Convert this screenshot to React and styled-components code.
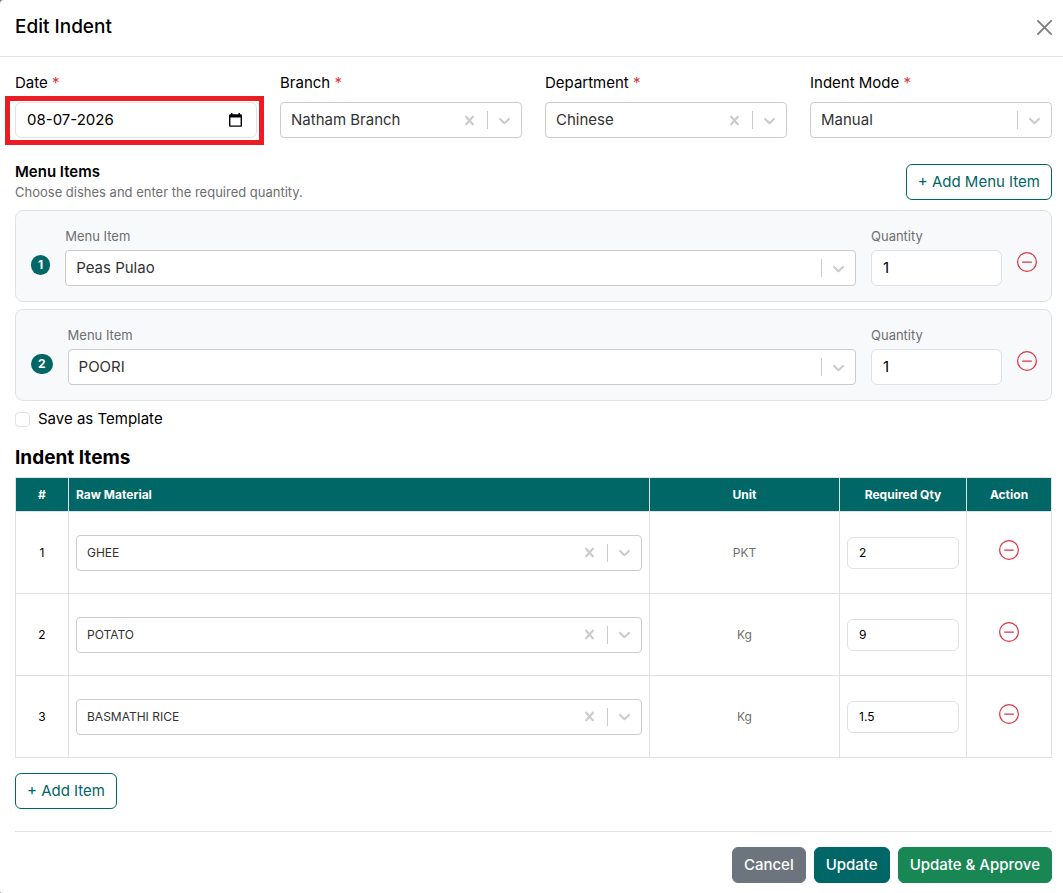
import React, { useId } from "react";
import styled, { createGlobalStyle } from "styled-components";
import { BsDashCircle } from "react-icons/bs";

const GlobalStyle = createGlobalStyle`
  *, *::before, *::after { box-sizing: border-box; }
  body {
    margin: 0;
    background: #7f7f7f;
    color: #000;
    font-family: Inter, "Liberation Sans", sans-serif;
    font-size: 15px;
    line-height: 22px;
  }
  button, input, select { font: inherit; color: inherit; }
`;

const Dialog = styled.main`
  background: #fff;
  border-radius: 4px 0 0 2px;
  min-height: 100vh;
`;

const Header = styled.header`
  display: flex;
  align-items: center;
  justify-content: space-between;
  height: 57px;
  padding: 0 11px 2px 15px;
  border-bottom: 1px solid #dee2e6;
`;

const Title = styled.h1`
  margin: 0;
  font-size: 19px;
  font-weight: 500;
  line-height: 28px;
`;

const CloseButton = styled.button`
  display: flex;
  padding: 0;
  border: 0;
  background: none;
  opacity: 0.5;
  cursor: pointer;
`;

const Body = styled.form`
  padding: 15px 11px 10px 15px;
`;

const FieldGrid = styled.div`
  display: grid;
  grid-template-columns: repeat(4, minmax(0, 1fr));
  gap: 23px;
`;

const Field = styled.div`
  flex: ${(p) => (p.$grow ? "1 1 0" : "none")};
  width: ${(p) => p.$width || "auto"};
  min-width: 0;
`;

const Label = styled.label`
  display: block;
  margin-bottom: ${(p) => (p.$small ? "4px" : "8px")};
  color: ${(p) => (p.$small ? "#6d6f72" : "#000")};
  font-size: ${(p) => (p.$small ? "13px" : "15px")};
  line-height: ${(p) => (p.$small ? "20px" : "22px")};
`;

const Required = styled.span`
  color: #dc3545;
`;

const SelectBox = styled.div`
  display: flex;
  align-items: center;
  height: 36px;
  border: 1px solid #ccc;
  border-radius: 4px;
  background: #fff;
`;

const NativeSelect = styled.select`
  flex: 1;
  min-width: 0;
  height: 100%;
  padding: 0 10px;
  border: 0;
  outline: 0;
  background: none;
  color: #333;
  appearance: none;
  font-size: ${(p) => (p.$small ? "12px" : "15px")};
`;

const Indicator = styled.span`
  display: flex;
  padding: 0 7px;
  color: #ccc;
`;

const ClearButton = styled(Indicator).attrs({ as: "button", type: "button" })`
  padding: 0 8px;
  border: 0;
  background: none;
  cursor: pointer;
`;

const Separator = styled.span`
  align-self: stretch;
  width: 1px;
  margin: 8px 0;
  background: #ccc;
`;

const Input = styled.input`
  display: block;
  width: 100%;
  height: ${(p) => (p.$small ? "32px" : "36px")};
  padding: ${(p) => (p.$small ? "0 11px" : "0 11px 2px")};
  border: 1px solid #dee2e6;
  border-radius: 6px;
  outline: 0;
  background: #fff;
  font-size: ${(p) => (p.$small ? "12px" : "15px")};
`;

const DateBox = styled.div`
  position: relative;
  display: flex;
  align-items: center;
  height: 36px;
  padding-right: 14px;
  border: 1px solid #dee2e6;
  border-radius: 6px;

  &::after {
    content: "";
    position: absolute;
    inset: -7px -8px -8px -11px;
    border: 5px solid #ed1c24;
    pointer-events: none;
  }
`;

const DateInput = styled(Input)`
  flex: 1;
  min-width: 0;
  height: 100%;
  border: 0;
  background: none;
`;

const IconButton = styled.button`
  display: inline-flex;
  padding: 0;
  border: 0;
  background: none;
  color: ${(p) => (p.$danger ? "#dc3545" : "#000")};
  cursor: pointer;
`;

const SectionBar = styled.div`
  display: flex;
  align-items: center;
  justify-content: space-between;
  margin: 24px 0 8px;
`;

const SectionTitle = styled.h2`
  margin: 0;
  font-size: ${(p) => (p.$large ? "19px" : "15px")};
  font-weight: ${(p) => (p.$large ? 700 : 600)};
  line-height: ${(p) => (p.$large ? "24px" : "20px")};
`;

const Hint = styled.p`
  margin: 0;
  color: #6d6f72;
  font-size: 13px;
  line-height: 20px;
`;

const Button = styled.button`
  height: 36px;
  padding: 0 11px;
  border: 1px solid ${(p) => p.$color};
  border-radius: 6px;
  background: ${(p) => (p.$outline ? "#fff" : p.$color)};
  color: ${(p) => (p.$outline ? p.$color : "#fff")};
  font-weight: ${(p) => (p.$outline ? 400 : 500)};
  white-space: nowrap;
  cursor: pointer;
`;

const CardList = styled.div`
  display: grid;
  gap: 7px;
`;

const Card = styled.div`
  display: flex;
  align-items: flex-end;
  gap: 15px;
  padding: 15px 14px 15px 15px;
  border: 1px solid #dee2e6;
  border-radius: 8px;
  background: #f8f9fa;
`;

const Badge = styled.span`
  margin-bottom: 11px;
  padding: 4px 7px;
  border-radius: 10px;
  background: #006666;
  color: #fff;
  font-size: 12px;
  font-weight: 700;
  line-height: 12px;
`;

const CardAction = styled.div`
  display: flex;
  margin-bottom: 14px;
`;

const CheckRow = styled.label`
  display: flex;
  align-items: center;
  gap: 8px;
  width: fit-content;
  margin: 7px 0 16px;
`;

const Checkbox = styled.input.attrs({ type: "checkbox" })`
  width: 15px;
  height: 15px;
  margin: 0;
  border: 1px solid #dee2e6;
  border-radius: 4px;
  background: #fff;
  appearance: none;

  &:checked { background: #006666; }
`;

const Table = styled.table`
  width: 100%;
  margin: 7px 0 15px;
  border-collapse: collapse;
  table-layout: fixed;
  font-size: 12px;
  line-height: 18px;
`;

const HeadCell = styled.th`
  width: ${(p) => p.$width || "auto"};
  height: 34px;
  padding: 0 7px;
  border: 1px solid #dee2e6;
  background: #006666;
  color: #fff;
  font-weight: 700;
  text-align: ${(p) => p.$align || "center"};
`;

const Cell = styled.td`
  height: 82px;
  padding: 0 7px;
  border: 1px solid #dee2e6;
  color: ${(p) => (p.$muted ? "#6d6f72" : "#000")};
  text-align: center;
  vertical-align: middle;
`;

const Footer = styled.footer`
  display: flex;
  justify-content: flex-end;
  gap: 8px;
  margin-top: 22px;
  padding-top: 15px;
  border-top: 1px solid #dee2e6;
`;

const TEAL = "#006666";

const CloseIcon = () => (
  <svg width="15" height="15" viewBox="0 0 16 16" aria-hidden="true">
    <path d="M.293.293a1 1 0 0 1 1.414 0L8 6.586 14.293.293a1 1 0 1 1 1.414 1.414L9.414 8l6.293 6.293a1 1 0 0 1-1.414 1.414L8 9.414l-6.293 6.293a1 1 0 0 1-1.414-1.414L6.586 8 .293 1.707a1 1 0 0 1 0-1.414z" />
  </svg>
);

const ChevronIcon = () => (
  <svg width="19" height="19" viewBox="0 0 20 20" fill="currentColor" aria-hidden="true">
    <path d="M4.516 7.548c0.436-0.446 1.043-0.481 1.576 0l3.908 3.747 3.908-3.747c0.533-0.481 1.141-0.446 1.574 0 0.436 0.445 0.408 1.197 0 1.615-0.406 0.418-4.695 4.502-4.695 4.502-0.217 0.223-0.502 0.335-0.787 0.335s-0.57-0.112-0.789-0.335c0 0-4.287-4.084-4.695-4.502s-0.436-1.17 0-1.615z" />
  </svg>
);

const ClearIcon = () => (
  <svg width="19" height="19" viewBox="0 0 20 20" fill="currentColor" aria-hidden="true">
    <path d="M14.348 14.849c-0.469 0.469-1.229 0.469-1.697 0l-2.651-3.030-2.651 3.029c-0.469 0.469-1.229 0.469-1.697 0-0.469-0.469-0.469-1.229 0-1.697l2.758-3.15-2.759-3.152c-0.469-0.469-0.469-1.228 0-1.697s1.228-0.469 1.697 0l2.652 3.031 2.651-3.031c0.469-0.469 1.228-0.469 1.697 0s0.469 1.229 0 1.697l-2.758 3.152 2.758 3.15c0.469 0.469 0.469 1.229 0 1.698z" />
  </svg>
);

const CalendarIcon = () => (
  <svg width="13" height="14" viewBox="0 0 13 14" aria-hidden="true">
    <path
      fillRule="evenodd"
      d="M2 0h1.500v1.200h6V0H11v1.200h.6c.8 0 1.400.6 1.400 1.400v9.800c0 .8-.6 1.400-1.400 1.400H1.400C.6 13.800 0 13.200 0 12.400V2.600c0-.8.6-1.400 1.400-1.400H2V0zM1.400 4.600v7.800h10.200V4.600H1.400z"
    />
  </svg>
);

function Select({ value, clearable, small, ...rest }) {
  return (
    <SelectBox>
      <NativeSelect $small={small} defaultValue={value} {...rest}>
        <option>{value}</option>
      </NativeSelect>
      {clearable && (
        <ClearButton aria-label="Clear selection">
          <ClearIcon />
        </ClearButton>
      )}
      <Separator />
      <Indicator>
        <ChevronIcon />
      </Indicator>
    </SelectBox>
  );
}

function SelectField({ label, ...rest }) {
  const id = useId();
  return (
    <Field>
      <Label htmlFor={id}>
        {label} <Required>*</Required>
      </Label>
      <Select id={id} {...rest} />
    </Field>
  );
}

function RemoveButton({ label }) {
  return (
    <IconButton type="button" $danger aria-label={label}>
      <BsDashCircle size={20} />
    </IconButton>
  );
}

function MenuCard({ number, dish, quantity }) {
  const id = useId();
  return (
    <Card>
      <Badge>{number}</Badge>
      <Field $grow>
        <Label $small htmlFor={`${id}-dish`}>Menu Item</Label>
        <Select id={`${id}-dish`} value={dish} />
      </Field>
      <Field $width="131px">
        <Label $small htmlFor={`${id}-qty`}>Quantity</Label>
        <Input id={`${id}-qty`} defaultValue={quantity} />
      </Field>
      <CardAction>
        <RemoveButton label={`Remove ${dish}`} />
      </CardAction>
    </Card>
  );
}

const menuItems = [
  { dish: "Peas Pulao", quantity: "1" },
  { dish: "POORI", quantity: "1" },
];

const indentItems = [
  { material: "GHEE", unit: "PKT", qty: "2" },
  { material: "POTATO", unit: "Kg", qty: "9" },
  { material: "BASMATHI RICE", unit: "Kg", qty: "1.5" },
];

export default function App() {
  return (
    <>
      <GlobalStyle />
      <Dialog>
        <Header>
          <Title>Edit Indent</Title>
          <CloseButton type="button" aria-label="Close">
            <CloseIcon />
          </CloseButton>
        </Header>
        <Body onSubmit={(e) => e.preventDefault()}>
          <FieldGrid>
            <Field>
              <Label htmlFor="indent-date">
                Date <Required>*</Required>
              </Label>
              <DateBox>
                <DateInput id="indent-date" defaultValue="08-07-2026" />
                <IconButton type="button" aria-label="Open calendar">
                  <CalendarIcon />
                </IconButton>
              </DateBox>
            </Field>
            <SelectField label="Branch" value="Natham Branch" clearable />
            <SelectField label="Department" value="Chinese" clearable />
            <SelectField label="Indent Mode" value="Manual" />
          </FieldGrid>

          <SectionBar>
            <div>
              <SectionTitle>Menu Items</SectionTitle>
              <Hint>Choose dishes and enter the required quantity.</Hint>
            </div>
            <Button type="button" $outline $color={TEAL}>+ Add Menu Item</Button>
          </SectionBar>

          <CardList>
            {menuItems.map((item, i) => (
              <MenuCard key={item.dish} number={i + 1} {...item} />
            ))}
          </CardList>

          <CheckRow>
            <Checkbox />
            Save as Template
          </CheckRow>

          <SectionTitle $large>Indent Items</SectionTitle>
          <Table>
            <thead>
              <tr>
                <HeadCell $width="53px">#</HeadCell>
                <HeadCell $align="left">Raw Material</HeadCell>
                <HeadCell $width="190px">Unit</HeadCell>
                <HeadCell $width="127px">Required Qty</HeadCell>
                <HeadCell $width="85px">Action</HeadCell>
              </tr>
            </thead>
            <tbody>
              {indentItems.map((item, i) => (
                <tr key={item.material}>
                  <Cell>{i + 1}</Cell>
                  <Cell>
                    <Select small clearable value={item.material} aria-label={`Raw material ${i + 1}`} />
                  </Cell>
                  <Cell $muted>{item.unit}</Cell>
                  <Cell>
                    <Input $small defaultValue={item.qty} aria-label={`Required quantity ${i + 1}`} />
                  </Cell>
                  <Cell>
                    <RemoveButton label={`Remove ${item.material}`} />
                  </Cell>
                </tr>
              ))}
            </tbody>
          </Table>
          <Button type="button" $outline $color={TEAL}>+ Add Item</Button>

          <Footer>
            <Button type="button" $color="#6c757d">Cancel</Button>
            <Button type="submit" $color={TEAL}>Update</Button>
            <Button type="button" $color="#198754">Update &amp; Approve</Button>
          </Footer>
        </Body>
      </Dialog>
    </>
  );
}
